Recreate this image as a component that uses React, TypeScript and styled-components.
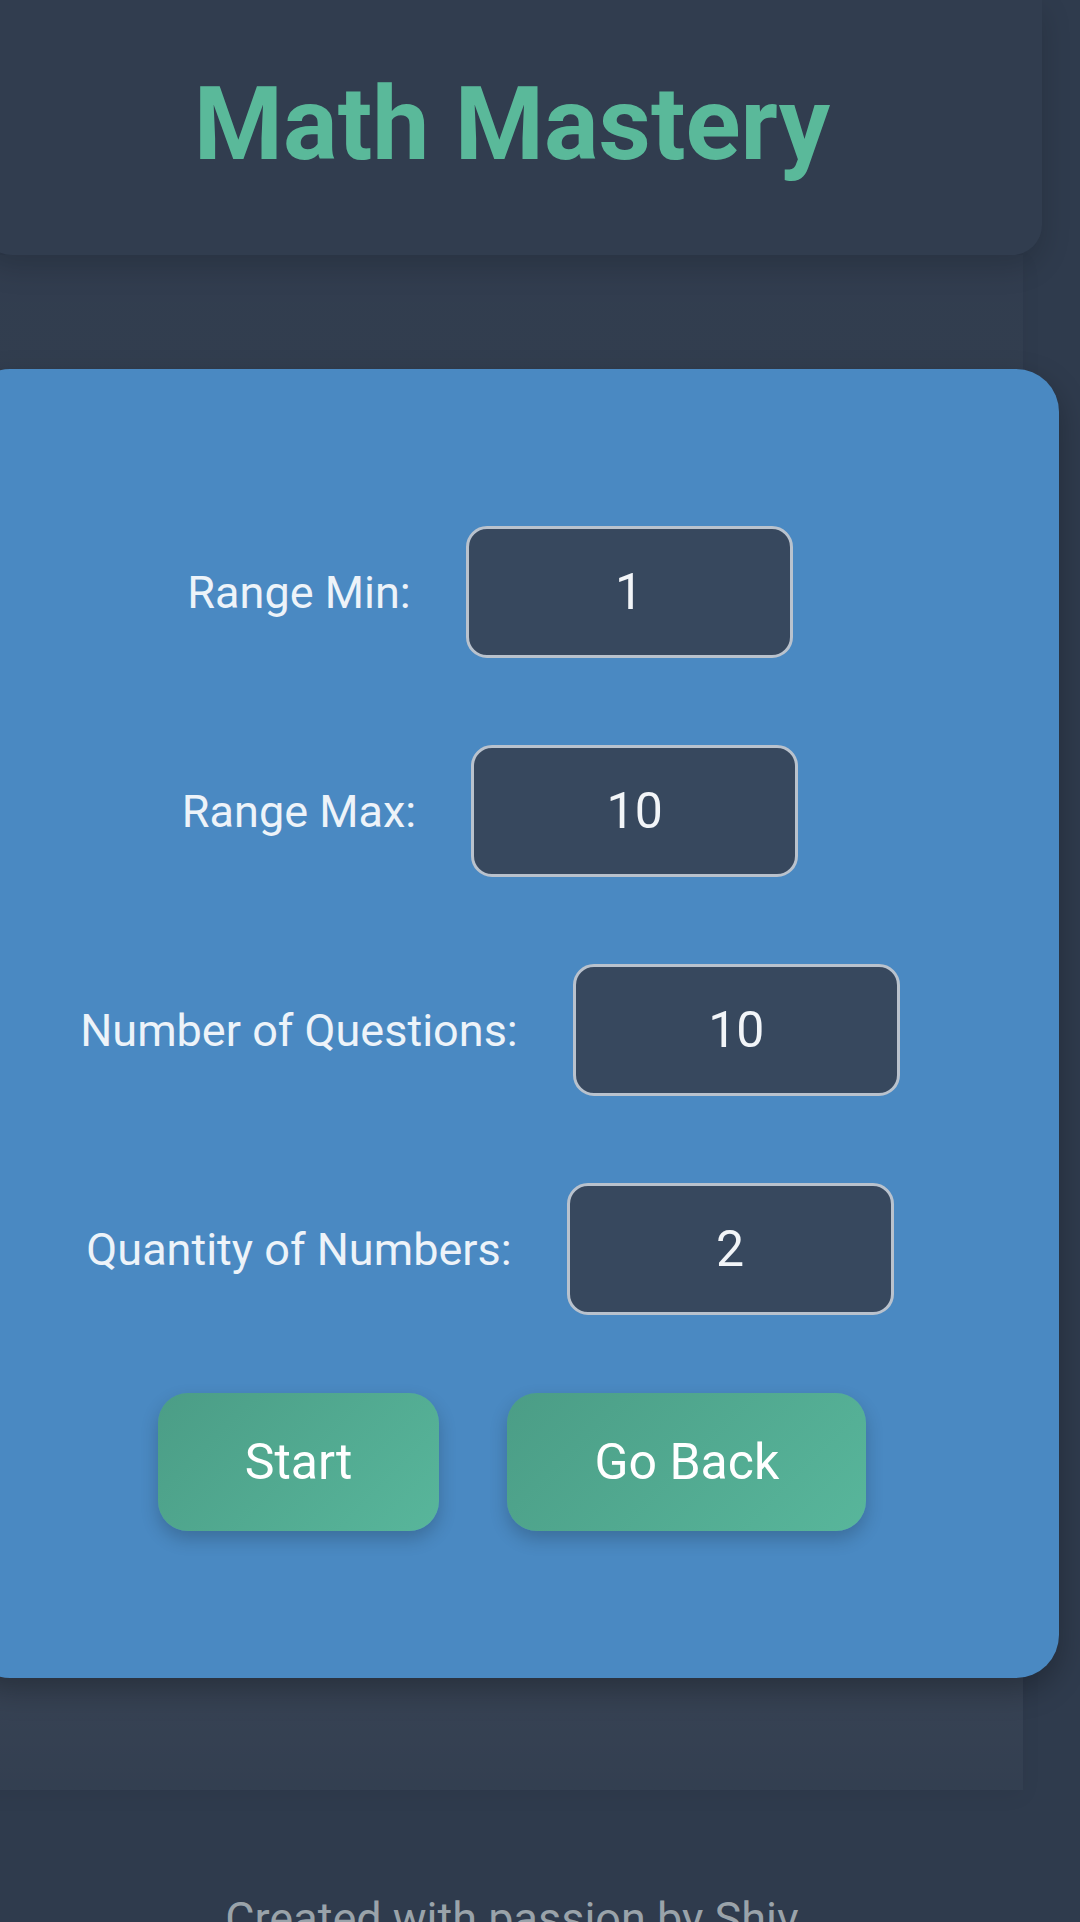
import React from "react";
import styled, { createGlobalStyle } from "styled-components";

const GlobalStyle = createGlobalStyle`
  html, body {
    margin: 0;
    padding: 0;
    background: #2f3b4d;
    overflow: hidden;
  }
  body {
    font-family: Roboto, "Liberation Sans", sans-serif;
  }
  * { box-sizing: border-box; }
`;

const Page = styled.div`
  width: 1080px;
  height: 1922px;
  overflow: hidden;
  display: flex;
  flex-direction: column;
  background: #2f3b4d;
`;

const Header = styled.header`
  flex: none;
  margin-left: -18px;
  width: 1060px;
  height: 255px;
  padding-bottom: 7px;
  background: #313d4f;
  border-radius: 0 0 30px 30px;
  box-shadow: 0 12px 30px rgba(0, 0, 0, 0.16);
  display: flex;
  align-items: center;
  justify-content: center;
  position: relative;
  z-index: 2;
`;

const Title = styled.h1`
  margin: 0;
  font-family: Roboto, "Liberation Sans", sans-serif;
  font-weight: 700;
  font-size: 102px;
  line-height: 1;
  color: #5ab99a;
`;

const Main = styled.main`
  flex: none;
  margin-left: -43px;
  width: 1066px;
  padding: 114px 0 112px;
  background: linear-gradient(
    180deg,
    rgba(255, 255, 255, 0.012) 0%,
    rgba(255, 255, 255, 0.03) 60%,
    rgba(255, 255, 255, 0.045) 92%,
    rgba(255, 255, 255, 0.02) 100%
  );
  box-shadow: 0 6px 20px rgba(0, 0, 0, 0.05);
`;

const Card = styled.section`
  margin-left: 10px;
  margin-right: -36px;
  height: 1309px;
  padding: 158px 46px 0 0;
  background: #4a89c2;
  border-radius: 43px;
  box-shadow: 0 12px 30px rgba(0, 0, 0, 0.28);
  display: flex;
  flex-direction: column;
  gap: 89px;
`;

const Row = styled.div`
  display: flex;
  align-items: center;
  justify-content: center;
  gap: 55px;
  height: 130px;
`;

const Label = styled.label`
  font-family: Roboto, "Liberation Sans", sans-serif;
  font-size: 45px;
  color: #edf3f9;
  white-space: nowrap;
`;

const NumberInput = styled.input`
  width: 327px;
  height: 132px;
  border: 3px solid #b9c2cd;
  border-radius: 21px;
  background: #37485e;
  color: #f2f5f8;
  font-family: Roboto, "Liberation Sans", sans-serif;
  font-size: 50px;
  text-align: center;
  outline: none;
  padding: 0;
  -moz-appearance: textfield;
  &::-webkit-outer-spin-button,
  &::-webkit-inner-spin-button {
    -webkit-appearance: none;
    margin: 0;
  }
`;

const Buttons = styled.div`
  display: flex;
  justify-content: center;
  gap: 68px;
  margin-top: -10px;
  padding-left: 44px;
`;

const Button = styled.button`
  height: 138px;
  padding: 0 87px;
  border: none;
  border-radius: 30px;
  background: linear-gradient(135deg, #4b9d86 0%, #58b69b 100%);
  color: #ffffff;
  font-family: Roboto, "Liberation Sans", sans-serif;
  font-size: 50px;
  box-shadow: 0 8px 18px rgba(0, 0, 0, 0.2);
  cursor: pointer;
`;

const Footer = styled.footer`
  flex: none;
  padding-top: 106px;
  padding-right: 56px;
  text-align: center;
  font-family: Roboto, "Liberation Sans", sans-serif;
  font-size: 45px;
  line-height: 1;
  color: #9aa3aa;
  white-space: nowrap;
`;

const fields = [
  { id: "min", label: "Range Min:", value: 1 },
  { id: "max", label: "Range Max:", value: 10 },
  { id: "questions", label: "Number of Questions:", value: 10 },
  { id: "quantity", label: "Quantity of Numbers:", value: 2 },
];

export default function App() {
  return (
    <>
      <GlobalStyle />
      <Page>
        <Header>
          <Title>Math Mastery</Title>
        </Header>
        <Main>
          <Card>
            {fields.map((f) => (
              <Row key={f.id}>
                <Label htmlFor={f.id}>{f.label}</Label>
                <NumberInput id={f.id} type="number" defaultValue={f.value} />
              </Row>
            ))}
            <Buttons>
              <Button>Start</Button>
              <Button>Go Back</Button>
            </Buttons>
          </Card>
        </Main>
        <Footer>Created with passion by Shiv</Footer>
      </Page>
    </>
  );
}
